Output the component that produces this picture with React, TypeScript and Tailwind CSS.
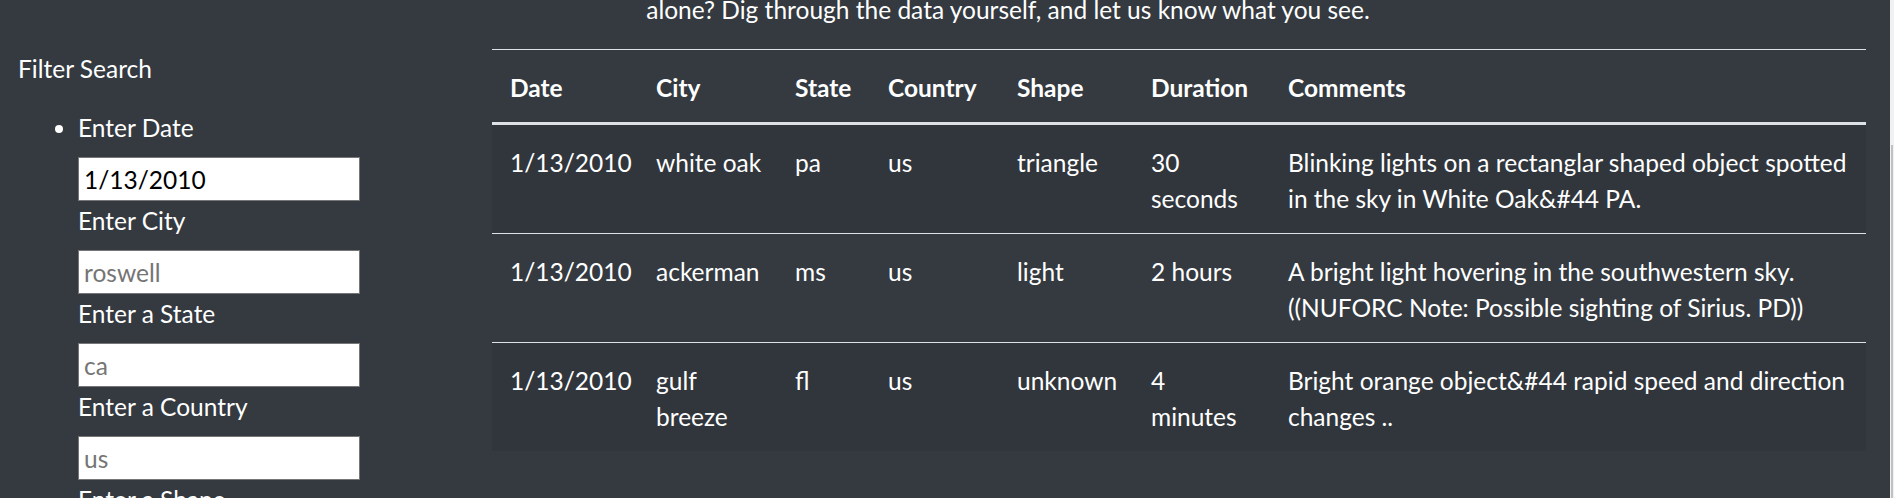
type Sighting = {
  date: string;
  city: string[];
  state: string;
  country: string;
  shape: string;
  duration: string[];
  comments: string[];
};

const rows: Sighting[] = [
  {
    date: "1/13/2010",
    city: ["white oak"],
    state: "pa",
    country: "us",
    shape: "triangle",
    duration: ["30", "seconds"],
    comments: ["Blinking lights on a rectanglar shaped object spotted", "in the sky in White Oak&#44 PA."],
  },
  {
    date: "1/13/2010",
    city: ["ackerman"],
    state: "ms",
    country: "us",
    shape: "light",
    duration: ["2 hours"],
    comments: ["A bright light hovering in the southwestern sky.", "((NUFORC Note: Possible sighting of Sirius. PD))"],
  },
  {
    date: "1/13/2010",
    city: ["gulf", "breeze"],
    state: "fl",
    country: "us",
    shape: "unknown",
    duration: ["4", "minutes"],
    comments: ["Bright orange object&#44 rapid speed and direction", "changes .."],
  },
];

const headers = ["Date", "City", "State", "Country", "Shape", "Duration", "Comments"];
const widths = ["w-[146px]", "w-[139px]", "w-[93px]", "w-[129px]", "w-[134px]", "w-[137px]", "w-[596px]"];

function Lines({ lines }: { lines: string[] }) {
  return (
    <>
      {lines.map((l, i) => (
        <div key={i} className="whitespace-nowrap">
          {l}
        </div>
      ))}
    </>
  );
}

function Label({ children }: { children: string }) {
  return <label className="block h-[36px] pt-[2px]">{children}</label>;
}

function Field({ label, placeholder }: { label: string; placeholder: string }) {
  return (
    <>
      <Label>{label}</Label>
      <input
        placeholder={placeholder}
        className="block mt-[13px] w-[282px] h-[44px] bg-white border border-[#767676] pl-[5px] text-black placeholder:text-[#757575] outline-none"
      />
    </>
  );
}

export default function App() {
  const cell = "px-[18px] pt-[20px] pb-[16px] text-left align-top";

  return (
    <div className="flex w-full h-[498px] overflow-hidden bg-[#343a40] text-white text-[24.5px] leading-[36px] font-['Lato',sans-serif]">
      <aside className="w-[492px] shrink-0 pl-[18px] pt-[49px]">
        <div className="h-[36px] pt-[2px]">Filter Search</div>
        <ul className="list-disc pl-[60px] mt-[23px]">
          <li>
            <span className="block h-[36px] pt-[2px]">Enter Date</span>
            <input
              defaultValue="1/13/2010"
              className="block mt-[13px] w-[282px] h-[44px] bg-white border border-[#767676] pl-[5px] text-black outline-none"
            />
            <Field label="Enter City" placeholder="roswell" />
            <Field label="Enter a State" placeholder="ca" />
            <Field label="Enter a Country" placeholder="us" />
            <Label>Enter a Shape</Label>
          </li>
        </ul>
      </aside>

      <main className="w-[1374px] shrink-0">
        <p className="-mt-[8px] mb-[21px] w-[1032px] text-center whitespace-nowrap">
          alone? Dig through the data yourself, and let us know what you see.
        </p>
        <table className="w-[1374px] table-fixed">
          <colgroup>
            {widths.map((w, i) => (
              <col key={i} className={w} />
            ))}
          </colgroup>
          <thead>
            <tr className="border-t border-[#dee2e6] border-b-[3px] border-b-[#dee2e6]">
              {headers.map((h) => (
                <th key={h} className={cell + " font-bold"}>
                  {h}
                </th>
              ))}
            </tr>
          </thead>
          <tbody>
            {rows.map((r, i) => (
              <tr
                key={i}
                className={(i > 0 ? "border-t border-[#dee2e6] " : "") + (i % 2 === 0 ? "bg-[#31363c]" : "")}
              >
                <td className={cell}>{r.date}</td>
                <td className={cell}>
                  <Lines lines={r.city} />
                </td>
                <td className={cell}>{r.state}</td>
                <td className={cell}>{r.country}</td>
                <td className={cell}>{r.shape}</td>
                <td className={cell}>
                  <Lines lines={r.duration} />
                </td>
                <td className={cell}>
                  <Lines lines={r.comments} />
                </td>
              </tr>
            ))}
          </tbody>
        </table>
      </main>

      <div className="flex-1" />
      <div className="w-[4px] shrink-0 flex flex-col bg-[#f1f1f1]">
        <div className="h-[145px]" />
        <div className="flex-1 ml-[1px] w-[2px] bg-[#c1c1c1]" />
      </div>
    </div>
  );
}
